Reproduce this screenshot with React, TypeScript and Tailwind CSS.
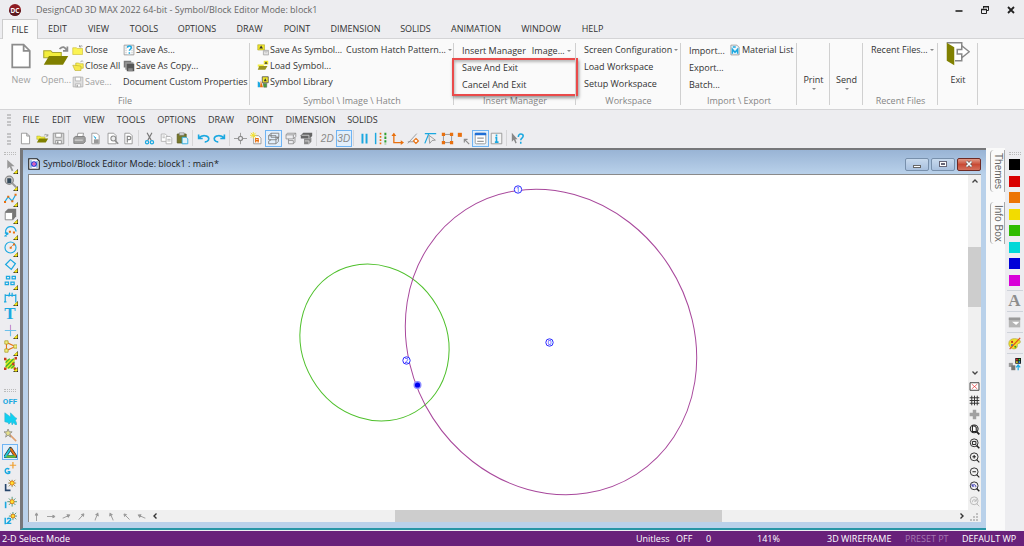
import type { ReactNode } from "react";

const G = "#8c8c8c";
const C = "#1ba8e0";
const O = "#e8700f";

const icons: Record<string, ReactNode> = {
  page: <path d="M3 1.500h6.500L13 5v9.500H3zM9.500 1.500V5H13" fill="#fff" stroke={G} />,
  open: (
    <>
      <path d="M1 5h4l1 1h5v3H1z" fill="#f3ee3c" stroke="#a8a530" strokeWidth=".6" />
      <path d="M1 13l3-5h11l-3 5z" fill="#808000" />
      <path d="M10 4c2-2 3-1 4 .5M12 5h2.5V2.5" fill="none" stroke={G} />
    </>
  ),
  save: (
    <>
      <path d="M1.5 1.5h13v13h-13z" fill="#d6d6d6" stroke={G} />
      <path d="M4.500 1.500h7v5h-7zM4.500 10.500h7v4h-7z" fill="#fff" stroke={G} />
      <path d="M6 11.500h2v3H6z" fill={G} />
    </>
  ),
  close: (
    <>
      <path d="M1 5h5l1 1h7v8H1z" fill="#fbf354" stroke="#c9bb2e" strokeWidth=".8" />
      <path d="M10 4c1-2 3-2 4-1M10 1.500V4h2.500" fill="none" stroke={G} />
    </>
  ),
  closeAll: (
    <>
      <path d="M5 4h4l1 1h5v6H5z" fill="#fbf354" stroke="#b9ab2e" strokeWidth=".8" />
      <path d="M1 7h2l9 1v6H4z" fill="#f7e94e" stroke="#b9ab2e" strokeWidth=".8" />
      <path d="M11 3c1-2 3-2 4-1" fill="none" stroke={G} />
    </>
  ),
  saveAs: (
    <>
      <path d="M1.500 1.500h13v13h-13z" fill="#fff" stroke={G} />
      <path d="M4 1.500v13M12 1.500v13" stroke="#aaa" strokeDasharray="2 1" />
      <path d="M6 5c0-3 5-3 5 0 0 2-2.500 2-2.500 4M8.500 11v2" fill="none" stroke={C} strokeWidth="2" />
    </>
  ),
  saveCopy: (
    <>
      <path d="M1 1h10v9H1z" fill="#777" />
      <path d="M3 3h11v10H3z" fill="#999" />
      <path d="M5 5h10v10H5z" fill="#555" />
      <path d="M7 11h6v4H7z" fill="#888" />
    </>
  ),
  saveSymbol: (
    <>
      <path d="M1 1h9v7H1z" fill="#efe52c" stroke="#a39b1c" strokeWidth=".7" />
      <path d="M3 6l2.500-4L8 6z" fill="#333" />
      <path d="M8.500 8.500h7v6h-7z" fill="#e4e4e4" stroke="#a0a0a0" />
      <path d="M10.500 8.500h3v2h-3z" fill="#fff" stroke="#aaa" />
    </>
  ),
  loadSymbol: (
    <>
      <path d="M1 6h8v3H1z" fill="#f3ee3c" />
      <path d="M1 13l2-5h11l-3 5z" fill="#9a9420" />
      <path d="M9 1h6v5H9z" fill="#efe52c" />
      <path d="M10 5l2-3 2 3z" fill="#333" />
    </>
  ),
  library: (
    <>
      <path d="M7 1h8v8H7z" fill="#efe52c" stroke="#444" />
      <path d="M9 7l2-4 2 4z" fill="#333" />
      <path d="M1 7v8h3V9z" fill={C} />
      <path d="M5 6l3 9H4z" fill={O} />
      <path d="M8 10h5v5H9z" fill="#4a9c3a" stroke="#555" strokeWidth=".6" />
    </>
  ),
  material: (
    <>
      <path d="M2.500 1.500h8l3 3v10h-11z" fill="#eef6fb" stroke={G} />
      <path d="M5 3h4v2H5z" fill={C} />
      <path d="M4.500 13V7L8 11l3.500-4v6" fill="none" stroke={C} strokeWidth="2" />
    </>
  ),
  print: (
    <>
      <path d="M5 6l1-4.500h7L12 6z" fill="#fff" stroke={G} />
      <path d="M1 7l2-1.500h11L15 7v5l-2 2H1z" fill="#a0a0a0" stroke="#777" />
      <path d="M2 10h10" stroke="#eee" />
    </>
  ),
  preview: (
    <>
      <path d="M3.500 1.500h6l3 3v10h-9z" fill="#fff" stroke={G} />
      <path d="M5 4l4 3-1 2z" fill={C} />
      <path d="M6 9h6v5H6z" fill="#999" />
    </>
  ),
  find: (
    <>
      <path d="M2.500 1.500h7l3 3v10h-10z" fill="#fff" stroke={G} />
      <circle cx="9" cy="8" r="3" fill="#eee" stroke={G} strokeWidth="1.300" />
      <path d="M11 10.500l4 4" stroke={G} strokeWidth="2" />
    </>
  ),
  pageSetup: (
    <>
      <path d="M3.500 1.500h6l3 3v10h-9z" fill="#fff" stroke={G} />
      <path d="M6.500 13V5.500H9c2.500 0 2.500 4 0 4H6.500" fill="none" stroke="#888" strokeWidth="1.500" />
    </>
  ),
  cut: (
    <>
      <path d="M5 1l5 9M11 1l-5 9" stroke="#777" strokeWidth="1.400" />
      <circle cx="5" cy="12.500" r="2" fill="none" stroke={C} strokeWidth="1.500" />
      <circle cx="11" cy="12.500" r="2" fill="none" stroke={C} strokeWidth="1.500" />
    </>
  ),
  copy: (
    <>
      <path d="M1.500 2.500h5l2 2v7h-7z" fill="#fff" stroke="#aaa" />
      <path d="M7.500 5.500h5l2 2v7h-7z" fill="#fff" stroke="#aaa" />
      <path d="M3 5h3M3 7h3M9 9h4M9 11h4" stroke="#aaa" />
    </>
  ),
  paste: (
    <>
      <path d="M1.500 2.500h11v11h-11z" fill="#77782a" stroke="#5c5c20" />
      <path d="M4 1h6v3H4z" fill="#ddd" stroke="#777" strokeWidth=".7" />
      <path d="M7.500 6.500h5l2 2v6h-7z" fill="#dff3fb" stroke={C} />
    </>
  ),
  undo: <path d="M2 3v5h5M2.500 7.500C6 3 14 4 14.500 8c0 3-3 4.500-5 4" fill="none" stroke={C} strokeWidth="2" />,
  redo: <path d="M14 3v5H9M13.500 7.500C10 3 2 4 1.500 8c0 3 3 4.500 5 4" fill="none" stroke={C} strokeWidth="2" />,
  target: (
    <>
      <path d="M0 8h16M8 1v14" stroke={G} />
      <circle cx="8" cy="8" r="2.500" fill="#ededf0" stroke={G} strokeWidth="1.500" />
    </>
  ),
  document: (
    <>
      <path d="M1 1h11l3 3v11H1z" fill="#fff" stroke="#222" strokeWidth="1.500" />
      <path d="M4 3v10M12 4v9M4 8h8" stroke="#2a7ac8" strokeWidth="1.300" />
      <circle cx="8" cy="8" r="3" fill="#e8d8f8" stroke="#2430d0" strokeWidth="1.500" />
      <path d="M8 5.500v5M5.500 8h5" stroke="#d82a9a" strokeWidth="1.200" />
    </>
  ),
  newSheet: (
    <>
      <path d="M4.500 4.500h6l3 3v7h-9z" fill="#fff" stroke={G} />
      <path d="M7 13V8h3v5M7 10.500h4" fill="none" stroke={O} strokeWidth="1.500" />
      <path d="M4 0v8M0 4h8M1 1l6 6M7 1L1 7" stroke="#f4e22c" strokeWidth="1.200" />
    </>
  ),
  wire: (
    <path d="M5 1.500h9.500v5H12M5 1.500l-3 3v5h9l3.500-3M2 4.500h9v5M5 9.500l-3 2v3h9v-5M11 14.500l3-3v-5M5 1.500v5h9" fill="none" stroke="#777" />
  ),
  hidden: <path d="M4 1.500h10.500v4l-3 3h-9v-5zM2.500 3.500h9v5M11.500 3.500l3-2M5.500 8.500v6h6l2-2v-6M5.500 10.500h6v4" fill="none" stroke={G} />,
  shaded: (
    <>
      <path d="M4 1h11v4l-3 3H1V4z" fill="#666" />
      <path d="M5 8h7l2-1v5l-3 3H5z" fill="#888" />
      <path d="M2 4h9v4M6 11h5v4" fill="none" stroke="#ddd" />
    </>
  ),
  parallel: <path d="M5.500 2v12M10.500 2v12" stroke={C} strokeWidth="2.400" />,
  dotted: (
    <>
      <path d="M2 1v14" stroke={C} strokeWidth="1.800" />
      <path d="M8 1v14" stroke={O} strokeWidth="2" strokeDasharray="2 2" />
      <path d="M14 1v14" stroke="#2ea12e" strokeWidth="2.400" strokeDasharray="3 1.500" />
    </>
  ),
  axes: (
    <>
      <path d="M3.500 2v11H14" fill="none" stroke={O} strokeWidth="1.600" />
      <path d="M0.500 5l3-4 3 4zM12 10l4 3-4 3z" fill={O} />
    </>
  ),
  snapLine: (
    <>
      <path d="M1 14L12 2M1 12h7" stroke={G} />
      <path d="M11 8l3 3-3 3-3-3z" fill="#fff" stroke={O} strokeWidth="1.500" />
    </>
  ),
  snapAngle: (
    <>
      <path d="M1 14L6 2h9M1 2h5" fill="none" stroke={C} strokeWidth="1.500" />
      <path d="M6 4l8 6-4 .5L7 14z" fill="#eee" stroke={G} />
    </>
  ),
  nodes: (
    <>
      <path d="M3 3h10v10H3z" fill="none" stroke="#888" />
      <path d="M1 1h4v4H1zM11 1h4v4h-4zM1 11h4v4H1zM11 11h4v4h-4z" fill={O} />
    </>
  ),
  pick: (
    <>
      <path d="M1 1h5v5H1z" fill={O} />
      <path d="M15 15L9.500 9.500M9 13V9h4" fill="none" stroke={G} strokeWidth="1.400" />
    </>
  ),
  form: (
    <>
      <rect x="1.500" y="1.500" width="13" height="13" rx="1.500" fill="#fff" stroke={G} />
      <path d="M1 1h14v3H1z" fill="#1f6fd6" />
      <path d="M4 7.500h8M4 11.500h8" stroke="#999" strokeWidth="1.500" />
    </>
  ),
  info: (
    <>
      <path d="M1.500 1.500h13v13h-13z" fill="#f5f5f5" stroke={G} />
      <path d="M8 3v2.500M6.500 7H8v5M6 12.500h4.500" fill="none" stroke={C} strokeWidth="2" />
    </>
  ),
  help: (
    <>
      <path d="M1 1v11l2.500-2.500L5.500 14l1.500-.8L5.300 9H8z" fill="#888" />
      <path d="M9 6c0-5 6-4 6-1 0 2.500-3 2.500-3 5M12 12v2.500" fill="none" stroke={C} strokeWidth="1.900" />
    </>
  ),
  pointer: <path d="M4 1v11l3-2.500L9.500 15l2-1L9 9h4z" fill="#999" />,
  zoom: (
    <>
      <circle cx="6.500" cy="6.500" r="5" fill="#ccc" stroke="#888" strokeWidth="1.500" />
      <path d="M4 4h4l1 1v5H4z" fill="#34495a" />
      <path d="M10 10l5 5" stroke="#999" strokeWidth="2.500" />
    </>
  ),
  polyline: (
    <>
      <path d="M1 12l4-6 5 5 4-7" fill="none" stroke={C} strokeWidth="1.500" />
      <path d="M0 11h2.500v2.500H0zM4 4.500h2.500V7H4zM9 10h2.500v2.500H9zM13 2h2.500v2.500H13z" fill={O} />
    </>
  ),
  cube: (
    <>
      <path d="M1 5l4-4h10v9l-4 5z" fill="#777" />
      <path d="M1.500 5.500h9v9h-9z" fill="#fff" stroke="#777" />
    </>
  ),
  arc: (
    <>
      <path d="M3 14V9M2 9C1 1 13-1 15 8M0.500 14l5-3.500M1 10h4" fill="none" stroke={C} strokeWidth="1.500" />
      <path d="M6 7h2.500v2.500H6zM11 8h2.500v2.500H11z" fill={O} />
    </>
  ),
  circle: (
    <>
      <circle cx="8" cy="8" r="6.800" fill="none" stroke={C} strokeWidth="1.400" />
      <path d="M8 8l4-4" stroke="#999" />
      <path d="M7 7h2.500v2.500H7zM11 3h2.500v2.500H11z" fill={O} />
    </>
  ),
  diamond: <path d="M8 2l6 5-5 7-7-6z" fill="none" stroke={C} strokeWidth="1.500" />,
  squares: <path d="M3 3h4v3H3zM10 3h4v3h-4zM1.500 10h4v3h-4zM8.500 10h4v3h-4z" fill="none" stroke={C} strokeWidth="1.500" />,
  dimension: <path d="M1.500 4v10M14.500 4v10M2 5.500h12M7 2l-1 5M10 2v5M0 13.500h3" fill="none" stroke={C} strokeWidth="1.500" />,
  plus: (
    <>
      <path d="M8 1v7" stroke="#c48fd0" strokeWidth="1.400" />
      <path d="M1 8h14M8 8v7" stroke="#6cc0ea" strokeWidth="1.400" />
    </>
  ),
  triangle: (
    <>
      <path d="M3 3v10l11-5z" fill="none" stroke={O} strokeWidth="1.300" />
      <path d="M1 1h4v4H1zM1 11h4v4H1zM12 6h4v4h-4z" fill="#f5f080" stroke="#b0a330" />
    </>
  ),
  pattern: (
    <>
      <path d="M2 3l12-1-2 6 2 6H2z" fill="#d8e820" />
      <path d="M2 7l5-5M2 12L12 2M5 14l8-8M9 14l4-4" stroke="#38b030" strokeWidth="1.500" />
      <path d="M0 1h3v3H0zM13 0h3v3h-3zM0 13h3v3H0zM12 13h3v3h-3zM10 7h3v3h-3z" fill="#c63b22" />
    </>
  ),
  cursors: <path d="M1 1l7 5V1l6 6 2 1-2 2 2 5-2 1-2-3-2 3-1-4-3 3-1-2-4-1z" fill="#10d0f0" stroke="#35aecb" strokeWidth=".7" />,
  wand: (
    <>
      <path d="M7 7l8 8" stroke="#e0a070" strokeWidth="2" />
      <path d="M5 0l1.500 3.500H10L7 6l1 4-3-2.500L2 10l1-4L0 3.500h3.500z" fill="#e5e08c" stroke="#888" />
    </>
  ),
  gravity: (
    <>
      <path d="M8 3L14.500 13h-13z" fill="none" stroke="#333" strokeWidth="3.800" strokeLinejoin="round" />
      <path d="M8 3L1.500 13h13" fill="none" stroke="#20c8e0" strokeWidth="2.400" />
      <path d="M8 3l6.500 10" stroke={O} strokeWidth="2.400" />
      <path d="M3 13h11" stroke="#6cc02c" strokeWidth="2.400" />
    </>
  ),
  snapG: (
    <>
      <path d="M11 0v8M7 4h8" stroke="#f0a030" strokeWidth="1.500" />
      <path d="M6.500 9c-2-2-5-1-5 2s4 4 5.500 2.500V12H4.500" fill="none" stroke={C} strokeWidth="1.800" />
    </>
  ),
  snapL: (
    <>
      <path d="M2 6v8h6" fill="none" stroke="#25456b" strokeWidth="2" />
      <path d="M10 1v9M5 5h10M6 1l8 8M14 1L6 9" stroke="#8a8440" />
      <circle cx="10" cy="5" r="2.500" fill="#ffe330" stroke={O} />
    </>
  ),
  snapI: (
    <>
      <path d="M2 7v8" stroke={C} strokeWidth="2" />
      <path d="M10 1v12M4 7h12M6 3l8 8M14 3l-8 8" stroke="#368d65" />
      <circle cx="10" cy="7" r="2.500" fill="#ffe330" stroke={O} />
    </>
  ),
  snapI2: (
    <>
      <path d="M1.500 7v8M4 9c1-2 5-1.500 4 1l-4 4h5" fill="none" stroke={C} strokeWidth="1.800" />
      <path d="M11 0v10M6 5h10M8 2l7 7M15 1L8 8" stroke="#368d65" />
      <circle cx="11" cy="5" r="2.300" fill="#ffe330" stroke={O} />
    </>
  ),
  noFill: (
    <>
      <path d="M1.500 2.500h13v11h-13z" fill="#fff" stroke="#333" strokeWidth="1.300" />
      <path d="M4 4.500l8 7M12 4.500l-8 7" stroke="#e03030" />
    </>
  ),
  grid: <path d="M4 1v14M8 1v14M12 1v14M1 4h14M1 8h14M1 12h14" stroke="#333" strokeWidth="1.400" />,
  cross: <path d="M5.500 1h5v4.500H15v5h-4.500V15h-5v-4.500H1v-5h4.500z" fill="#a0a0a0" />,
  zoomPage: (
    <>
      <circle cx="7.500" cy="7" r="5.700" fill="none" stroke="#222" strokeWidth="1.500" />
      <path d="M5 3h3l2.500 2v6H5z" fill="#fff" stroke="#222" strokeWidth="1.500" />
      <path d="M11 11l4 4" stroke="#222" strokeWidth="2.500" />
    </>
  ),
  zoomBox: (
    <>
      <circle cx="7.500" cy="7" r="5.700" fill="none" stroke="#222" strokeWidth="1.300" />
      <path d="M5 5h5v4.500H5z" fill="none" stroke="#222" strokeWidth="1.400" />
      <path d="M11 11l4 4" stroke="#222" strokeWidth="2.200" />
    </>
  ),
  zoomIn: (
    <>
      <circle cx="7.500" cy="7" r="5.700" fill="none" stroke="#222" strokeWidth="1.300" />
      <path d="M7.500 4.500v5M5 7h5M11 11l4 4" stroke="#222" strokeWidth="1.600" />
    </>
  ),
  zoomOut: (
    <>
      <circle cx="7.500" cy="7" r="5.700" fill="none" stroke="#222" strokeWidth="1.300" />
      <path d="M5 7h5M11 11l4 4" stroke="#222" strokeWidth="1.600" />
    </>
  ),
  zoomPrev: (
    <>
      <circle cx="7.500" cy="7" r="5.700" fill="none" stroke="#222" strokeWidth="1.300" />
      <path d="M4.500 4v3.500h3M5 7c2-3 5-2 5 2" fill="none" stroke="#2a28b0" strokeWidth="1.300" />
      <path d="M11 11l4 4" stroke="#222" strokeWidth="2" />
    </>
  ),
  zoomNext: (
    <>
      <circle cx="7.500" cy="7" r="5.700" fill="none" stroke="#b4b4b4" strokeWidth="1.300" />
      <path d="M10.500 4v3.500h-3M10 7c-2-3-5-2-5 2M11 11l4 4" fill="none" stroke="#b4b4b4" strokeWidth="1.300" />
    </>
  ),
  up: <path d="M3 11l5-5 5 5" fill="none" stroke="#444" strokeWidth="2.600" />,
  down: <path d="M3 5l5 5 5-5" fill="none" stroke="#444" strokeWidth="2.600" />,
  left: <path d="M11 3L6 8l5 5" fill="none" stroke="#333" strokeWidth="2.800" />,
  right: <path d="M5 3l5 5-5 5" fill="none" stroke="#333" strokeWidth="2.800" />,
  fillBox: (
    <>
      <path d="M1 2h14v12H1z" fill="#b5b5b5" />
      <path d="M1 2h14v3H1z" fill="#999" />
      <path d="M5 7h9l-4 4z" fill="#fff" />
    </>
  ),
  palette: (
    <>
      <path d="M8 2c9 0 8 6 5 6-3 .5 0 4-3 6-4 2-9-1-9-6 0-4 3-6 7-6z" fill="#f1e22a" stroke="#a59a20" strokeWidth=".7" />
      <circle cx="5" cy="6" r="1.300" fill="#c03020" />
      <circle cx="5" cy="10" r="1.300" fill="#2878c0" />
      <circle cx="9" cy="12" r="1.200" fill="#28902e" />
      <path d="M2 15L15 1" stroke="#e0521a" strokeWidth="1.500" />
    </>
  ),
  layers: (
    <>
      <path d="M9 0h7v7H9z" fill="#111" />
      <path d="M10 1h2v2h-2z" fill="#e33" />
      <path d="M13 1h2v2h-2z" fill="#3c3" />
      <path d="M10 4h2v2h-2z" fill="#dd3" />
      <path d="M13 4h2v2h-2z" fill="#39f" />
      <path d="M1 6h5v5H1z" fill="#999" />
      <path d="M4 9h5v6H4z" fill="#777" />
      <path d="M12.500 15V9M10 11.500l2.500-3 2.500 3" fill="none" stroke={C} strokeWidth="1.500" />
    </>
  ),
  exit: (
    <>
      <path d="M.5.5h10v12H6" fill="#fff" stroke="#888" />
      <path d="M.5.5l5 3v12l-5-3z" fill="#808000" />
      <path d="M7.500 5h3V2.500l5 4-5 4V8h-3z" fill="#fff" stroke="#888" />
    </>
  ),
};

function Icon({ name, className }: { name: string; className: string }) {
  return (
    <svg viewBox="0 0 16 16" className={`shrink-0 ${className}`} aria-hidden="true">
      {icons[name]}
    </svg>
  );
}

function Caret() {
  return <span className="ml-0.5 border-x-2 border-t-2 border-x-transparent border-t-[#888]" />;
}

const tabs = [
  ["FILE", "w-9"], ["EDIT", "w-[39px]"], ["VIEW", "w-[43px]"], ["TOOLS", "w-[48px]"],
  ["OPTIONS", "w-[58px]"], ["DRAW", "w-[47px]"], ["POINT", "w-[48px]"], ["DIMENSION", "w-[69px]"],
  ["SOLIDS", "w-[51px]"], ["ANIMATION", "w-[70px]"], ["WINDOW", "w-[60px]"], ["HELP", "w-[43px]"],
];

const menus = [
  ["FILE", "w-[30px]"], ["EDIT", "w-[31px]"], ["VIEW", "w-[34px]"], ["TOOLS", "w-[40px]"],
  ["OPTIONS", "w-[51px]"], ["DRAW", "w-[38px]"], ["POINT", "w-[40px]"], ["DIMENSION", "w-[61px]"],
  ["SOLIDS", "w-[43px]"],
];

const toolbar = [
  { width: "w-[50px]", items: ["page", "open", "save"] },
  { width: "w-[66px]", items: ["print", "preview", "find", "pageSetup"] },
  { width: "w-[50px]", items: ["cut", "copy", "paste"] },
  { width: "w-[33px]", items: ["undo", "redo"] },
  { width: "w-[83px]", items: ["target", "newSheet", "wire", "hidden", "shaded"] },
  { width: "w-[33px]", items: ["2D", "3D"] },
  { width: "w-[149px]", items: ["parallel", "dotted", "axes", "snapLine", "snapAngle", "nodes", "pick", "form", "info"] },
  { width: "w-[17px]", items: ["help"] },
];
const active = ["wire", "3D", "form"];

const drawTools = ["pointer", "zoom", "polyline", "cube", "arc", "circle", "diamond", "squares", "dimension", "text", "plus", "triangle", "pattern"];
const snapTools = ["OFF", "cursors", "wand", "gravity", "snapG", "snapL", "snapI", "snapI2"];
const viewTools = ["noFill", "grid", "cross", "zoomPage", "zoomBox", "zoomIn", "zoomOut", "zoomPrev", "zoomNext"];
const swatches = ["bg-black", "bg-[#d90000]", "bg-[#ec7404]", "bg-[#f2dc00]", "bg-[#2fbc00]", "bg-[#00d8d8]", "bg-[#0000d8]", "bg-[#d800d8]"];
const angles = [0, 90, 65, 42, 22, -25, -45, -65];

function Group({ label, width, children }: { label?: string; width: string; children: ReactNode }) {
  return (
    <section className={`relative flex shrink-0 flex-col pt-[3px] ${width}`}>
      <div className="flex flex-1">{children}</div>
      <p className="h-[15px] text-center leading-[13px] text-[#858585]">{label}</p>
      <span className="absolute right-0 top-1 bottom-1 w-px bg-[#d0d0d0]" />
    </section>
  );
}

function Item({ icon, label, caret, disabled }: { icon?: string; label: string; caret?: boolean; disabled?: boolean }) {
  return (
    <button disabled={disabled} className="flex h-4 items-center whitespace-nowrap disabled:text-[#a0a0a0]">
      {icon && <Icon name={icon} className={disabled ? "mr-px size-3 opacity-70" : "mr-px size-3"} />}
      {label}
      {caret && <Caret />}
    </button>
  );
}

function Ribbon() {
  return (
    <div className="flex h-[72px] border-y border-[#d4d4d6] bg-[#fafafa]">
      <Group label="File" width="w-[250px]">
        <button disabled className="flex w-[42px] flex-col items-center gap-1 text-[#a0a0a0]">
          <Icon name="page" className="size-7" />
          New
        </button>
        <button disabled className="flex w-[28px] flex-col items-center gap-1 text-[#a0a0a0]">
          <Icon name="open" className="size-7" />
          Open...
        </button>
        <div className="ml-0.5 w-[51px]">
          <Item icon="close" label="Close" />
          <Item icon="closeAll" label="Close All" />
          <Item icon="save" label="Save..." disabled />
        </div>
        <div>
          <Item icon="saveAs" label="Save As..." />
          <Item icon="saveCopy" label="Save As Copy..." />
          <Item label="Document Custom Properties" />
        </div>
      </Group>
      <Group label="Symbol \ Image \ Hatch" width="w-[204px]">
        <div className="ml-[7px] w-[89px]">
          <Item icon="saveSymbol" label="Save As Symbol..." />
          <Item icon="loadSymbol" label="Load Symbol..." />
          <Item icon="library" label="Symbol Library" />
        </div>
        <Item label="Custom Hatch Pattern..." caret />
      </Group>
      <Group label="Insert Manager" width="w-[122px]">
        <div className="mt-px ml-2 flex flex-col gap-px">
          <div className="flex gap-1.5">
            <Item label="Insert Manager" />
            <Item label="Image..." caret />
          </div>
          <Item label="Save And Exit" />
          <Item label="Cancel And Exit" />
        </div>
        <span className="pointer-events-none absolute -inset-x-0.5 top-[19px] bottom-[13px] border-2 border-[#ea4b4b] shadow-[1px_2px_3px_#0006,inset_1px_2px_3px_#0004]" />
      </Group>
      <Group label="Workspace" width="w-[105px]">
        <div className="ml-2 flex flex-col gap-px">
          <Item label="Screen Configuration" caret />
          <Item label="Load Workspace" />
          <Item label="Setup Workspace" />
        </div>
      </Group>
      <Group label="Import \ Export" width="w-[116px]">
        <div className="mt-px ml-2 flex w-10 flex-col gap-px">
          <Item label="Import..." />
          <Item label="Export..." />
          <Item label="Batch..." />
        </div>
        <Item icon="material" label="Material List" />
      </Group>
      <Group width="w-[33px]">
        <button className="mt-8 flex h-6 w-full flex-col items-center gap-0.5">
          Print
          <span className="border-x-2 border-t-2 border-x-transparent border-t-[#888]" />
        </button>
      </Group>
      <Group width="w-[33px]">
        <button className="mt-8 flex h-6 w-full flex-col items-center gap-0.5">
          Send
          <span className="border-x-2 border-t-2 border-x-transparent border-t-[#888]" />
        </button>
      </Group>
      <Group label="Recent Files" width="w-[75px]">
        <div className="ml-2">
          <Item label="Recent Files..." caret />
        </div>
      </Group>
      <Group width="w-[40px]">
        <button className="flex w-full flex-col items-center gap-2">
          <Icon name="exit" className="size-6" />
          Exit
        </button>
      </Group>
    </div>
  );
}

function Toolbar() {
  return (
    <div className="flex h-[19px] items-center pl-[7px]">
      <span className="mr-1.5 h-3 w-1 border-x-2 border-dotted border-[#c4c4c6]" />
      {toolbar.map((group, i) => (
        <div key={i} className="flex">
          {i > 0 && <span className="mr-0.5 ml-px h-4 w-px bg-[#d6d6d8]" />}
          <div className={`flex ${group.width}`}>
            {group.items.map((name) => (
              <button
                key={name}
                aria-label={name}
                className={`flex h-[17px] flex-1 items-center justify-center border ${active.includes(name) ? "border-[#6fb4f4] bg-[#e2effb]" : "border-transparent"}`}
              >
                {icons[name] ? (
                  <Icon name={name} className="size-[13px]" />
                ) : (
                  <span className="font-['Liberation_Sans',sans-serif] text-[10px] italic text-[#8a8a8a]">{name}</span>
                )}
              </button>
            ))}
          </div>
        </div>
      ))}
    </div>
  );
}

function ToolStrip() {
  return (
    <aside className="flex w-5 shrink-0 flex-col pl-0.5">
      <span className="mt-1 ml-0.5 h-[3px] w-3 border-y border-dotted border-[#bbb]" />
      <div className="mt-0.5 flex h-[214px] flex-col justify-between">
        {drawTools.map((name) => (
          <button key={name} aria-label={name} className="relative flex h-4 w-4 items-center justify-center">
            {name === "text" ? (
              <span className="font-['Liberation_Serif',serif] text-[17px] leading-4 font-bold text-[#1ba8e0]">T</span>
            ) : (
              <>
                <Icon name={name} className="size-[13px]" />
                <svg viewBox="0 0 5 5" className="absolute right-0 -bottom-px size-[5px]">
                  <path d="M5 0v5H0z" fill="#222" />
                  <path d="M4 1.500V4H1.500z" fill="#f5e616" stroke="#f5e616" />
                </svg>
              </>
            )}
          </button>
        ))}
      </div>
      <span className="mt-[18px] ml-0.5 h-[3px] w-3 border-y border-dotted border-[#bbb]" />
      <div className="mt-0.5 flex h-[133px] flex-col justify-between">
        {snapTools.map((name) => (
          <button
            key={name}
            aria-label={name}
            className={`flex h-4 w-4 items-center justify-center border ${name === "gravity" ? "border-[#6fb4f4] bg-[#e2effb]" : "border-transparent"}`}
          >
            {icons[name] ? (
              <Icon name={name} className="size-[13px]" />
            ) : (
              <span className="font-['Roboto',sans-serif] text-[8px] font-bold text-[#1ba8e0]">{name}</span>
            )}
          </button>
        ))}
      </div>
    </aside>
  );
}

function Handle({ x, y, label }: { x: number; y: number; label: string }) {
  return (
    <g>
      <circle cx={x} cy={y} r="3.700" fill="#fff" stroke="#2a2aff" />
      <text x={x} y={y + 2.500} textAnchor="middle" fontSize="7" fill="#2a2aff">{label}</text>
    </g>
  );
}

function Drawing() {
  return (
    <svg className="h-full w-full" role="img" aria-label="block1 drawing">
      <ellipse cx="345.500" cy="167.500" rx="80.500" ry="72.300" transform="rotate(59.500 345.500 167.500)" fill="none" stroke="#4fc02c" />
      <ellipse cx="522" cy="167" rx="157.500" ry="140.500" transform="rotate(57.200 522 167)" fill="none" stroke="#a8489c" />
      <Handle x={489} y={14.5} label="1" />
      <Handle x={377.5} y={185.5} label="2" />
      <Handle x={520.5} y={167.5} label="0" />
      <circle cx="388.500" cy="210" r="4" fill="#8c8cff" />
      <circle cx="388.500" cy="210" r="2.600" fill="#0000f0" />
    </svg>
  );
}

function DocumentWindow() {
  return (
    <main className="flex min-w-0 flex-1 flex-col border-t-2 border-b-2 border-l-3 border-t-[#76777a] border-b-[#2796a6] border-l-[#76777a] bg-[#b9d1ea] px-[5px] pb-1.5">
      <header className="-mx-[5px] flex h-6 shrink-0 items-center bg-linear-to-b from-[#99b4d5] to-[#b9d1ea] px-[5px] pt-1">
        <Icon name="document" className="size-3" />
        <h1 className="ml-[3px] text-[#1c1c1c]">Symbol/Block Editor Mode: block1 : main*</h1>
        <div className="ml-auto flex gap-0.5">
          <button aria-label="Minimize" className="flex h-[13px] w-6 items-center justify-center rounded-xs border border-[#7890ac] bg-linear-to-b from-[#c8daee] to-[#a8c0de]">
            <span className="mt-1 h-[3px] w-2 border border-[#666] bg-white" />
          </button>
          <button aria-label="Maximize" className="flex h-[13px] w-6 items-center justify-center rounded-xs border border-[#7890ac] bg-linear-to-b from-[#c8daee] to-[#a8c0de]">
            <span className="flex h-1.5 w-2 items-center justify-center border border-[#667] bg-white">
              <span className="h-0.5 w-1 bg-[#667]" />
            </span>
          </button>
          <button aria-label="Close" className="flex h-[13px] w-6 items-center justify-center rounded-xs border border-[#6e2a24] bg-linear-to-b from-[#e09a88] via-[#c84a34] to-[#d4705c]">
            <svg viewBox="0 0 8 8" className="size-2">
              <path d="M1.500 1.500l5 5M6.500 1.500l-5 5" stroke="#555" strokeWidth="2.600" />
              <path d="M1.500 1.500l5 5M6.500 1.500l-5 5" stroke="#fff" strokeWidth="1.600" />
            </svg>
          </button>
        </div>
      </header>

      <div className="flex min-h-0 flex-1 flex-col border-t border-l border-[#8a8a8a] bg-[#f0f0f0]">
        <div className="flex min-h-0 flex-1">
          <div className="min-w-0 flex-1 bg-white">
            <Drawing />
          </div>
          <div className="flex w-[13px] flex-col items-center">
            <button aria-label="Scroll up" className="flex h-3 items-center">
              <Icon name="up" className="size-2" />
            </button>
            <div className="flex w-full flex-1 flex-col">
              <span className="flex-[60]" />
              <span className="flex-[61] bg-[#cdcdcd]" />
              <span className="flex-[60]" />
            </div>
            <button aria-label="Scroll down" className="flex h-3 items-center">
              <Icon name="down" className="size-2" />
            </button>
            <div className="mb-0.5 flex h-[129px] flex-col justify-between">
              {viewTools.map((name) => (
                <button key={name} aria-label={name} className="flex h-3.5 items-center">
                  <Icon name={name} className="size-[11px]" />
                </button>
              ))}
            </div>
          </div>
        </div>
        {/* Direction arrows and horizontal scroll bar */}
        <div className="flex h-3 shrink-0 items-center">
          {angles.map((deg) => (
            <button key={deg} aria-label={`Direction ${deg}`} className="flex w-[15px] justify-center">
              <svg viewBox="0 0 10 10" className="size-[9px]" style={{ rotate: `${deg}deg` }}>
                <path d="M5 10V2M3.500 3.500L5 1l1.500 2.500z" fill="#999" stroke="#999" />
              </svg>
            </button>
          ))}
          <button aria-label="Scroll left" className="flex w-3 justify-center">
            <Icon name="left" className="size-2" />
          </button>
          <div className="flex h-full flex-1">
            <span className="flex-[234]" />
            <span className="flex-[328] bg-[#cdcdcd]" />
            <span className="flex-[234]" />
          </div>
          <button aria-label="Scroll right" className="flex w-3 justify-center">
            <Icon name="right" className="size-2" />
          </button>
          <svg viewBox="0 0 13 12" className="h-3 w-[13px]">
            <path d="M8 3h2v2H8zM5 6h2v2H5zM8 6h2v2H8zM2 9h2v2H2zM5 9h2v2H5zM8 9h2v2H8z" fill="#c0c0c0" />
          </svg>
        </div>
      </div>
    </main>
  );
}

function SidePanels() {
  return (
    <>
      <nav className="flex w-[19px] shrink-0 flex-col items-end gap-2.5 bg-[#fafafa] pt-0.5 font-['Liberation_Sans',sans-serif] text-[10px] text-[#666]">
        <button className="flex h-[42px] w-[15px] items-center justify-center rounded-l border-y border-l border-[#aaa] [writing-mode:vertical-rl]">Themes</button>
        <button className="flex h-[42px] w-[15px] items-center justify-center rounded-l border-y border-l border-[#aaa] whitespace-nowrap [writing-mode:vertical-rl]">Info Box</button>
      </nav>
      <aside className="flex w-[19px] shrink-0 flex-col items-center">
        <span className="mt-1 h-[3px] w-3 border-y border-dotted border-[#bbb]" />
        <div className="mt-1 flex h-[127px] flex-col justify-between">
          {swatches.map((color) => (
            <button key={color} aria-label={color} className={`size-[11px] ${color}`} />
          ))}
        </div>
        <div className="mt-1 w-4 divide-y divide-[#cfd3da] border-t border-[#cfd3da]">
          <button aria-label="Text style" className="flex h-[21px] w-full items-center justify-center font-['Liberation_Serif',serif] text-[17px] leading-5 font-bold text-[#8d8d8d]">
            A
          </button>
          {["fillBox", "palette", "layers"].map((name) => (
            <button key={name} aria-label={name} className="flex h-[21px] w-full items-center justify-center">
              <Icon name={name} className="size-[13px]" />
            </button>
          ))}
        </div>
      </aside>
    </>
  );
}

function StatusBar() {
  return (
    <footer className="mt-px flex h-[15px] shrink-0 items-center bg-[#68217a] pl-0.5 whitespace-nowrap text-white">
      <span className="mr-auto">2-D Select Mode</span>
      <span className="w-10">Unitless</span>
      <span className="w-[30px]">OFF</span>
      <span className="w-[51px]">0</span>
      <span className="w-[70px]">141%</span>
      <span className="w-[78px]">3D WIREFRAME</span>
      <span className="w-[57px] text-[#a678b2]">PRESET PT</span>
      <span className="w-[62px]">DEFAULT WP</span>
    </footer>
  );
}

export default function App() {
  return (
    <div className="flex h-screen flex-col overflow-hidden bg-[#ededf0] font-['Open_Sans','Noto_Sans',sans-serif] text-[9px] leading-3 text-[#333]">
      <header className="flex h-[19px] shrink-0 items-center pl-[9px] text-[#666]">
        <svg viewBox="0 0 12 12" className="mr-[15px] size-3">
          <circle cx="6" cy="6" r="6" fill="#8e1c22" />
          <path d="M0 6a6 6 0 0 0 12 0z" fill="#5c1a20" />
          <text x="6" y="8.500" textAnchor="middle" fontSize="6.500" fontWeight="700" fill="#fff">DC</text>
        </svg>
        <p>DesignCAD 3D MAX 2022 64-bit - Symbol/Block Editor Mode: block1</p>
        <div className="ml-auto flex items-center gap-[18px] pr-[9px]">
          <button aria-label="Minimize">
            <svg viewBox="0 0 8 8" className="size-2"><path d="M0.500 5h7" stroke="#222" strokeWidth="1.600" /></svg>
          </button>
          <button aria-label="Restore">
            <svg viewBox="0 0 8 8" className="size-2">
              <path d="M2.500 2.500v-2h5v4h-2M.5 3.500h5v4h-5z" fill="none" stroke="#222" />
              <path d="M2 .7h6M0 3.500h6" stroke="#222" strokeWidth="1.400" />
            </svg>
          </button>
          <button aria-label="Close">
            <svg viewBox="0 0 8 8" className="size-2"><path d="M1 1l6 6M7 1L1 7" stroke="#222" strokeWidth="1.800" /></svg>
          </button>
        </div>
      </header>

      <nav className="flex h-[19px] shrink-0 pl-0.5">
        {tabs.map(([label, width], i) => (
          <button
            key={label}
            className={`relative flex items-center justify-center ${width} ${i === 0 ? "z-10 -mb-px border-x border-t border-[#ccc] bg-[#fafafa]" : ""}`}
          >
            {label}
          </button>
        ))}
      </nav>
      <Ribbon />
      <nav className="flex h-[19px] shrink-0 items-center pl-[7px]">
        <span className="mr-[5px] h-3 w-1 border-x-2 border-dotted border-[#c4c4c6]" />
        {menus.map(([label, width]) => (
          <button key={label} className={width}>{label}</button>
        ))}
      </nav>
      <Toolbar />

      <div className="flex min-h-0 flex-1">
        <ToolStrip />
        <DocumentWindow />
        <SidePanels />
      </div>
      <StatusBar />
    </div>
  );
}
